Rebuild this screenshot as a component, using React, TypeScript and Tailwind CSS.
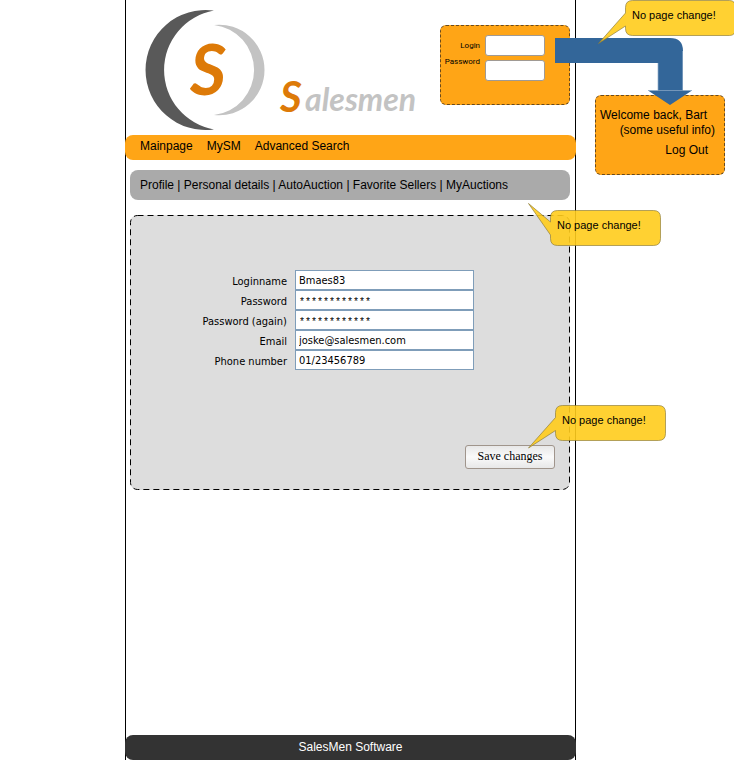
import React from "react";

const sans = "font-['Liberation_Sans',Arial,sans-serif]";
const condensed = "font-['DejaVu_Sans_Condensed',Tahoma,sans-serif]";

function Logo() {
  return (
    <svg width="300" height="135" viewBox="126 0 300 135" role="img" aria-label="Salesmen" className="shrink-0">
      <path d="M214 10.6A60 60 0 1 0 214 129.4A60.3 60.3 0 0 1 214 10.6Z" fill="#595959" />
      <path d="M214 25A45.3 45.3 0 1 1 214 115A45.3 45.3 0 0 0 214 25Z" fill="#c3c3c3" />
      <g className="font-['Brush_Script_MT','Lato',sans-serif] font-bold italic">
        <text x="190" y="95" fontSize="70" fill="#dd7a08">S</text>
        <text x="280" y="112" fontSize="42" fill="#dd7a08">S</text>
        <text x="305" y="111" fontSize="32" fill="#c3c3c3">alesmen</text>
      </g>
    </svg>
  );
}

type CalloutProps = { shape: string; className: string; viewBox: string; width: number; height: number; textClass: string };

function Callout({ shape, className, viewBox, width, height, textClass }: CalloutProps) {
  return (
    <div className={`absolute z-20 ${className}`}>
      <svg width={width} height={height} viewBox={viewBox} aria-hidden="true">
        <path d={shape} fill="#ffcc1c" fillOpacity="0.9" stroke="#8a7a35" strokeOpacity="0.65" />
      </svg>
      <p className={`absolute whitespace-nowrap text-[11px] leading-4 ${textClass}`}>No page change!</p>
    </div>
  );
}

function LoginBox() {
  const field = "h-[21px] w-[60px] rounded-[3px] border border-[#a09a94] bg-white px-1 text-[11px] outline-none";
  const label = "text-right text-[8px] leading-4 font-['Roboto',sans-serif]";
  return (
    <form className="mr-[5px] mt-[25px] flex h-20 w-[130px] shrink-0 justify-end gap-[5px] rounded-md border border-dashed border-[#6b4a1c] bg-[#ffa516] pr-6 pt-[9px]">
      <div className="flex flex-col pt-[3px]">
        <label htmlFor="login" className={label}>Login</label>
        <label htmlFor="pass" className={label}>Password</label>
      </div>
      <div className="flex flex-col gap-1">
        <input id="login" type="text" className={field} />
        <input id="pass" type="password" className={field} />
      </div>
    </form>
  );
}

function Welcome() {
  return (
    <>
      <section className="absolute left-full top-[95px] ml-5 h-20 w-[130px] rounded-md border border-dashed border-[#6b4a1c] bg-[#ffa516] pt-3 text-[12px] leading-[15px]">
        <p className="whitespace-nowrap pl-1">Welcome back, Bart</p>
        <p className="whitespace-nowrap pr-[9px] text-right">(some useful info)</p>
        <p className="pr-4 pt-[5px] text-right"><a href="#logout">Log Out</a></p>
      </section>
      <svg width="138" height="68" viewBox="555 38 138 68" aria-hidden="true" className="absolute left-full top-[38px] z-10 -ml-5">
        <path d="M555 38H670Q683 38 683 51V90.500H692L670 105L648 90.500H658V63H555Z" fill="#336699" />
        <path d="M648 90.500H692M658 63V90M682.500 51V90" stroke="#8fabc8" strokeOpacity="0.7" fill="none" />
      </svg>
      <Callout
        className="left-full top-0 ml-[22px]"
        width={140} height={46} viewBox="597 0 140 46"
        shape="M632.500 .5H729.500Q735.500 .5 735.500 7.500V28.500Q735.500 35.500 729.500 35.500H632.500Q625.500 35.500 625.500 28.500V26L598.500 43.500L625.500 13V7.500Q625.500 .5 632.500 .5Z"
        textClass="left-[35px] top-[7px]"
      />
    </>
  );
}

const fields = [
  { id: "loginname", label: "Loginname", value: "Bmaes83" },
  { id: "password", label: "Password", value: "************", masked: true },
  { id: "again", label: "Password (again)", value: "************", masked: true },
  { id: "email", label: "Email", value: "joske@salesmen.com" },
  { id: "phone", label: "Phone number", value: "01/23456789" },
];

function ProfileForm() {
  return (
    <form className="relative ml-1 mr-[5px] mt-[15px] h-[275px] rounded-lg bg-[#dddddd] pt-[55px]">
      <svg className="absolute inset-0 h-full w-full overflow-visible" aria-hidden="true">
        <rect x="0.5" y="0.5" width="100%" height="100%" rx="7" fill="none" stroke="#000" strokeDasharray="6 4" className="[height:calc(100%-1px)] [width:calc(100%-1px)]" />
      </svg>
      <div className={`relative flex flex-col text-[11px] ${condensed}`}>
        {fields.map((f) => (
          <div key={f.id} className="grid h-5 grid-cols-[157px_179px] gap-x-2">
            <label htmlFor={f.id} className="pt-[2px] text-right leading-5">{f.label}</label>
            <input
              id={f.id}
              type="text"
              defaultValue={f.value}
              className={`h-5 border border-[#7f9db9] bg-white px-[3px] outline-none ${f.masked ? "pt-1 font-['Liberation_Mono',monospace] text-[10px]" : ""}`}
            />
          </div>
        ))}
      </div>
      <div className="relative mr-[15px] mt-[75px] flex justify-end">
        <button type="button" className="h-6 w-[90px] rounded-[3px] border border-[#a0958c] bg-linear-to-b from-[#e8e8e8] via-[#fafafa] to-[#e8e8e8] pb-[2px] font-['Liberation_Serif','Times_New_Roman',serif] text-[12px] leading-4">
          Save changes
        </button>
      </div>
      <Callout
        className="-top-3 left-full -ml-[42px]"
        width={134} height={44} viewBox="528 203 134 44"
        shape="M557.500 210.500H653.500Q660.500 210.500 660.500 217.500V238.500Q660.500 245.500 653.500 245.500H557.500Q550.500 245.500 550.500 238.500V235L528.500 203.500L550.500 222V217.500Q550.500 210.500 557.500 210.500Z"
        textClass="left-[29px] top-[14px]"
      />
      <Callout
        className="left-full top-[190px] -ml-[42px]"
        width={139} height={44} viewBox="528 405 139 44"
        shape="M562.500 405.500H658.500Q665.500 405.500 665.500 412.500V433.500Q665.500 440.500 658.500 440.500H562.500Q555.500 440.500 555.500 433.500V430.500L528.500 448L555.500 417.500V412.500Q555.500 405.500 562.500 405.500Z"
        textClass="left-[34px] top-[7px]"
      />
    </form>
  );
}

const sections = ["Profile", "Personal details", "AutoAuction", "Favorite Sellers", "MyAuctions"];

export default function App() {
  return (
    <div className={`grid min-h-screen grid-cols-[125fr_451fr_158fr] overflow-hidden bg-white text-black ${sans}`}>
      <main className="relative col-start-2 flex min-w-0 flex-col border-x border-black">
        <header className="flex h-[135px] items-start justify-between">
          <Logo />
          <LoginBox />
        </header>
        <nav className="-mx-px flex h-[25px] gap-[14px] rounded-lg bg-[#ffa516] pl-[15px] text-[12px] leading-[23px]">
          <a href="#main">Mainpage</a>
          <a href="#mysm">MySM</a>
          <a href="#search">Advanced Search</a>
        </nav>
        <nav className="ml-1 mr-[5px] mt-[10px] h-[30px] whitespace-nowrap rounded-lg bg-[#aaaaaa] pl-[10px] text-[12px] leading-[31px]">
          {sections.map((s, i) => (
            <React.Fragment key={s}>
              {i > 0 && " | "}
              <a href={`#${s}`}>{s}</a>
            </React.Fragment>
          ))}
        </nav>
        <ProfileForm />
        <footer className="-mx-px mt-auto h-[25px] rounded-lg bg-[#333333] text-center text-[12px] leading-[25px] text-white">
          SalesMen Software
        </footer>
        <Welcome />
      </main>
    </div>
  );
}
